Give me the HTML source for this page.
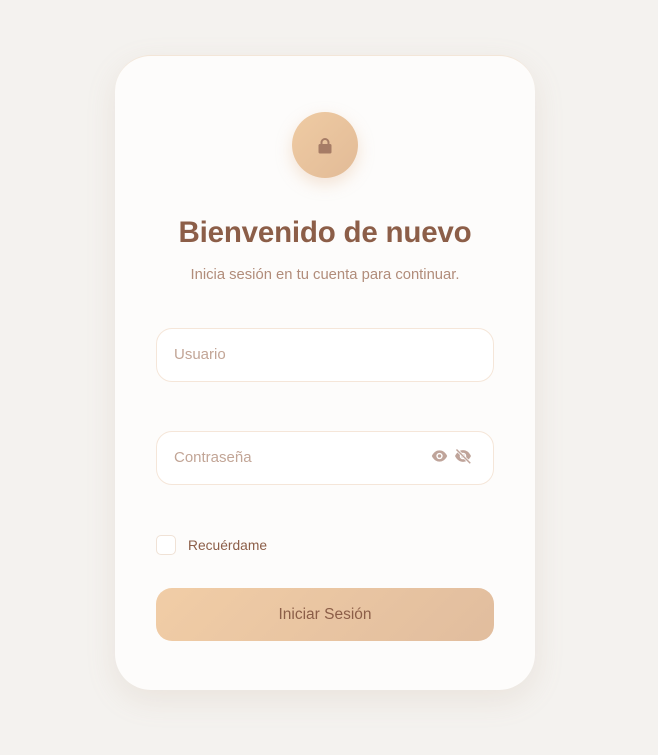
<!DOCTYPE html>
<html><head><meta charset="utf-8"><style>
*{box-sizing:border-box;margin:0;padding:0}
html,body{width:658px;height:755px;overflow:hidden}
body{background:#f4f2ef;font-family:"Liberation Sans",sans-serif;position:relative}
.card{position:absolute;left:115px;top:55px;width:420px;height:635px;background:#fdfcfb;border-radius:36px;box-shadow:0 10px 30px rgba(180,150,120,0.15);border-top:1px solid #f3e6d8}
.circle{position:absolute;left:177px;top:56px;width:66px;height:66px;border-radius:50%;background:linear-gradient(135deg,#efcba3,#e2bb97);box-shadow:0 6px 16px rgba(225,180,140,0.35)}
.lock{position:absolute;left:26px;top:25px;width:14px;height:17px}
h1{position:absolute;top:160px;left:0;width:100%;text-align:center;font-size:29.5px;color:#8c5e48;font-weight:bold;letter-spacing:-0.2px}
.sub{position:absolute;top:211px;left:0;width:100%;text-align:center;font-size:14.8px;color:#b18c7a}
.inp{position:absolute;left:41px;width:338px;height:54px;border:1px solid #f5e6d9;border-radius:16px;background:#fff;font-size:15px;color:#c2a596;padding:17px 0 0 17px}
.chk{position:absolute;left:41px;top:479px;width:20px;height:20px;border:1px solid #f0e2d6;border-radius:5px;background:#fff}
.rem{position:absolute;left:73px;top:482px;font-size:13.8px;color:#8c5e48}
.btn{position:absolute;left:41px;top:532px;width:338px;height:53px;border-radius:16px;background:linear-gradient(135deg,#f1cda6,#e1bd9e);text-align:center;line-height:53px;font-size:15.5px;color:#8c5e48}
</style></head><body>
<div class="card">
<div class="circle"><svg class="lock" viewBox="0 0 14 17"><path d="M3.5 8V5.5a3.5 3.5 0 0 1 7 0V8" fill="none" stroke="#a67c66" stroke-width="2"/><rect x="0.5" y="7" width="13" height="9.5" rx="1.5" fill="#a67c66"/></svg></div>
<h1>Bienvenido de nuevo</h1>
<div class="sub">Inicia sesión en tu cuenta para continuar.</div>
<div class="inp" style="top:272px">Usuario</div>
<div class="inp" style="top:375px">Contraseña
<svg style="position:absolute;left:274px;top:17px" width="17" height="14" viewBox="0 0 24 20"><path d="M1 10C4 4 8 2 12 2s8 2 11 8c-3 6-7 8-11 8S4 16 1 10z" fill="#bfa49a"/><circle cx="12" cy="10" r="4.5" fill="#fff"/><circle cx="12" cy="10" r="2.5" fill="#bfa49a"/></svg>
<svg style="position:absolute;left:297px;top:16px" width="18" height="16" viewBox="0 0 24 22"><path d="M1 11C4 5 8 3 12 3s8 2 11 8c-3 6-7 8-11 8S4 17 1 11z" fill="#bfa49a"/><circle cx="12" cy="11" r="4.5" fill="#fff"/><circle cx="12" cy="11" r="2.5" fill="#bfa49a"/><path d="M3 2l19 19" stroke="#fff" stroke-width="4"/><path d="M3 2l19 19" stroke="#bfa49a" stroke-width="2"/></svg>
</div>
<div class="chk"></div>
<div class="rem">Recuérdame</div>
<div class="btn">Iniciar Sesión</div>
</div>
</body></html>
